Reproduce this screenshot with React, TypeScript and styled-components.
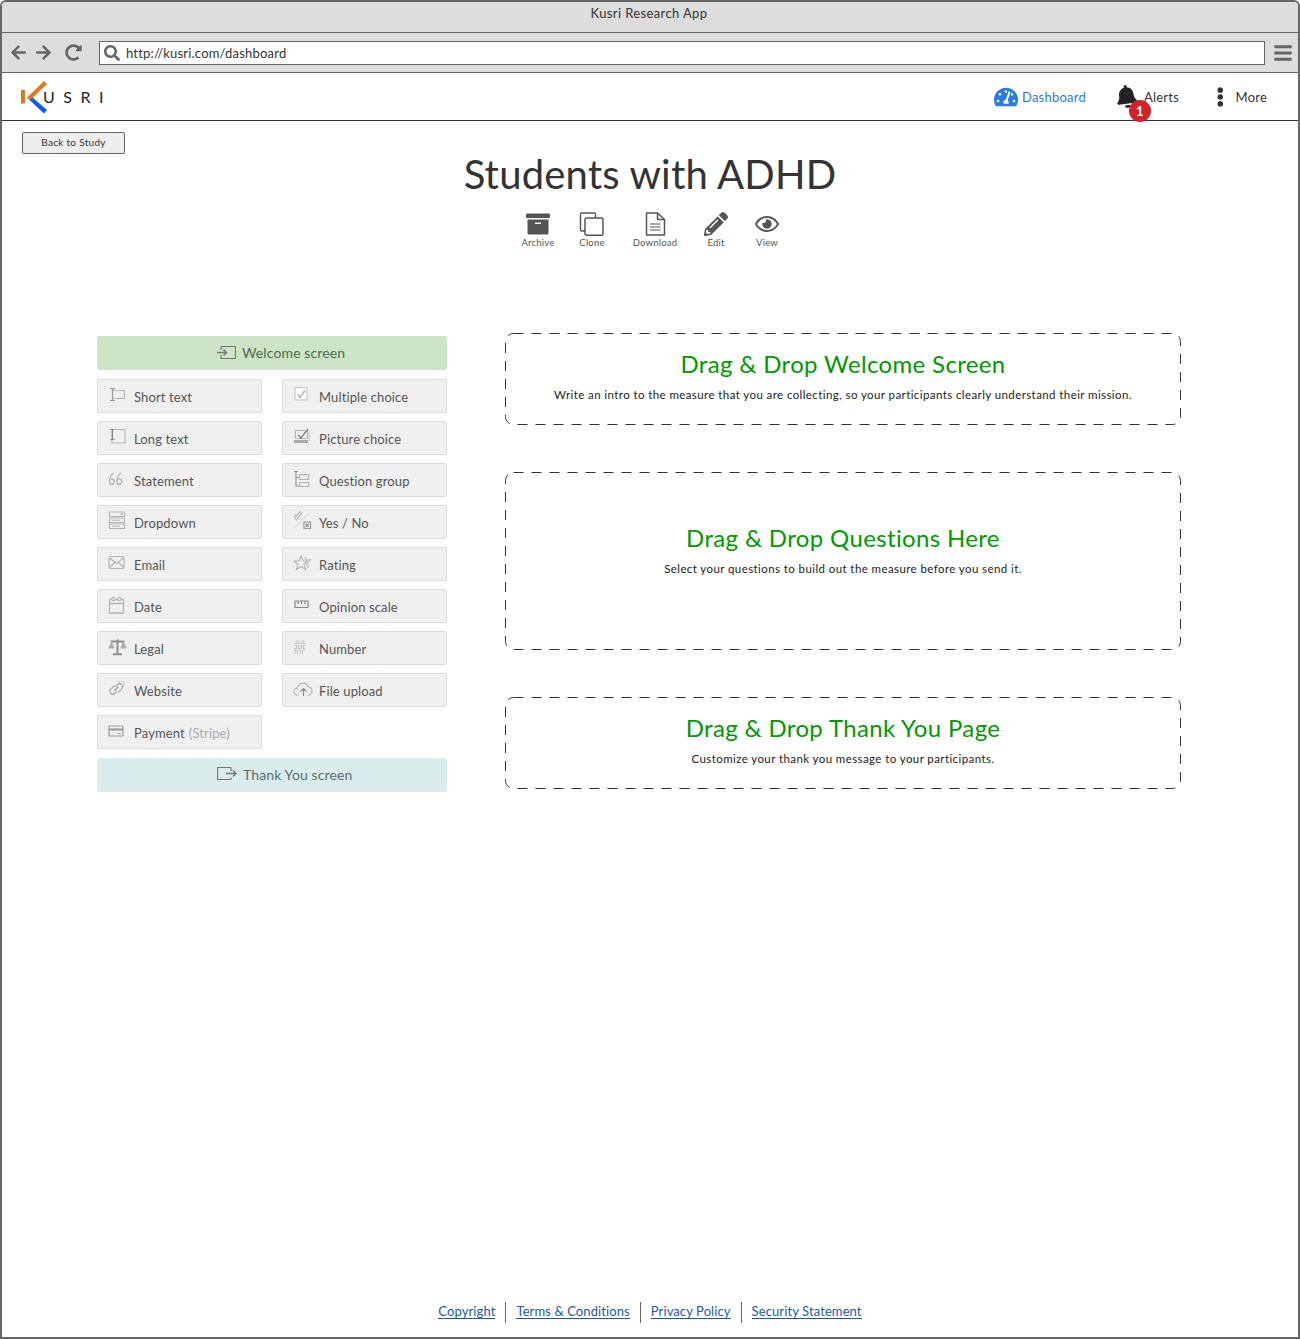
import React from "react";
import styled, { createGlobalStyle } from "styled-components";
import {
  FaArchive,
  FaArrowLeft,
  FaArrowRight,
  FaBars,
  FaBell,
  FaEllipsisV,
  FaPencilAlt,
  FaRedoAlt,
  FaRegEye,
  FaSearch,
  FaTachometerAlt,
} from "react-icons/fa";

const sketchFont = `"Lato", "Open Sans", sans-serif`;

const GlobalStyle = createGlobalStyle`
  html, body {
    margin: 0;
    padding: 0;
    background: #fff;
  }
  * {
    box-sizing: border-box;
  }
`;

const Glyph = ({ children, w = 20, h = 18 }: { children: React.ReactNode; w?: number; h?: number }) => (
  <svg width={w} height={h} viewBox={`0 0 ${w} ${h}`} fill="none" stroke="#b5b5b5" strokeWidth="1.2">
    {children}
  </svg>
);

const icons: Record<string, React.ReactNode> = {
  short: (
    <Glyph>
      <path d="M5 4.500h11.500v8H5" />
      <path d="M2 2.500h5M2 14.500h5M4.500 2.500v12" stroke="#999" />
    </Glyph>
  ),
  long: (
    <Glyph>
      <path d="M4 1.500h13v13.500H4z" />
      <path d="M2.500 1.500h4M2.500 11.500h4M4.500 1.500v10" stroke="#888" />
    </Glyph>
  ),
  statement: (
    <Glyph>
      <path d="M5.500 3C3 5 1.500 8 1.500 11c0 2 .8 3.500 2.200 3.500S6.200 13 6.200 11.500 5 9 3 9" strokeWidth="1.400" />
      <path d="M13 3c-2.500 2-4 5-4 8 0 2 .8 3.500 2.200 3.500s2.500-1.500 2.500-3S12.500 9 10.500 9" strokeWidth="1.400" />
    </Glyph>
  ),
  dropdown: (
    <Glyph h={19}>
      <path d="M1.500 1h15v4.500h-15zM1.500 7h15v4.500h-15zM1.500 13h15v4.500h-15z" />
      <path d="M4 9.250h8M4 15.250h8" />
      <path d="M12 2.500h3l-1.500 1.500z" fill="#999" stroke="none" />
    </Glyph>
  ),
  email: (
    <Glyph h={16}>
      <rect x="1" y="1.500" width="15" height="12" rx="2" />
      <path d="M1.500 3l7 5.500 7-5.500M1.500 12.500l5-5M15.500 12.500l-5-5" />
    </Glyph>
  ),
  date: (
    <Glyph>
      <path d="M1.500 3.500h2M7.500 3.500h2M13.500 3.500h2V17h-14V3.500M1.500 7.500h14" strokeWidth="1.300" />
      <circle cx="5.500" cy="3" r="1.700" />
      <circle cx="11.500" cy="3" r="1.700" />
    </Glyph>
  ),
  legal: (
    <Glyph>
      <path d="M9.500 1.500v14M5 16.200h9M2.500 3.500h14" stroke="#8c8c8c" strokeWidth="2" />
      <path d="M1 10h5l-2.500-6zM13 10h5l-2.500-6z" fill="#a5a5a5" />
    </Glyph>
  ),
  website: (
    <Glyph h={16}>
      <path d="M6.500 4.500l-3.800 3.800a2.900 2.900 0 0 0 4.100 4.100l2-2" strokeWidth="1.500" />
      <path d="M10 11.500l3.800-3.800a2.900 2.900 0 0 0-4.100-4.100l-2 2" strokeWidth="1.500" />
      <path d="M6.500 9.500l3.500-3.500" stroke="#999" strokeWidth="1.500" />
      <path d="M10 1.500a3 3 0 0 1 6 3" stroke="#ccc" />
    </Glyph>
  ),
  payment: (
    <Glyph w={17} h={14}>
      <rect x="1" y="2" width="14" height="10" rx="1" stroke="#999" />
      <path d="M1 5.500h14" stroke="#999" strokeWidth="2" />
      <path d="M9 9.500h4" />
    </Glyph>
  ),
  multiple: (
    <Glyph>
      <rect x="2" y="1.500" width="12" height="12.500" fill="#fafafa" stroke="#ccc" />
      <path d="M5 8.500l2 3 5-7" strokeWidth="1.500" />
    </Glyph>
  ),
  picture: (
    <Glyph>
      <path d="M2.500 2.500h12v8h-12z" />
      <path d="M5 7l3 3 7-9" stroke="#888" strokeWidth="1.500" />
      <path d="M1 12h14v3H1z" fill="#aaa" stroke="none" />
      <path d="M16.500 4v9" stroke="#ccc" />
    </Glyph>
  ),
  group: (
    <Glyph>
      <path d="M1 1.500h4M3 1.500v14.500h3M3 7.500h3" stroke="#999" />
      <path d="M6.500 4.500h9v5h-9zM6.500 12.500h9v4h-9z" />
    </Glyph>
  ),
  yesno: (
    <Glyph h={19}>
      <path d="M1.500 6l2 3 5-7a1.400 1.400 0 0 0-2-1L3.500 5 2.500 4z" />
      <path d="M2 16L15 3" stroke="#ddd" />
      <rect x="11" y="11" width="6.500" height="6.500" stroke="#999" />
      <path d="M12.700 12.700l3 3M15.700 12.700l-3 3" stroke="#888" />
    </Glyph>
  ),
  rating: (
    <Glyph>
      <path d="M8 2l2 5h5l-4 3.300 1.500 5.200L8 12.500l-4.500 3L5 10.300 1 7h5z" />
      <path d="M12 3l1 3h4l-3 3 1 5" stroke="#ccc" strokeWidth="2" />
    </Glyph>
  ),
  opinion: (
    <Glyph h={12}>
      <path d="M2 2h13v6.500H2zM5 2v3M8.500 2v3M12 2v3" stroke="#888" />
    </Glyph>
  ),
  number: (
    <Glyph w={14} h={18}>
      <path d="M5 2L3.500 16M10 2L8.500 16M1.500 6.500h11M1 11.500h11" strokeWidth="2.600" stroke="#bdbdbd" />
      <path d="M5 2L3.500 16M10 2L8.500 16M1.500 6.500h11M1 11.500h11" strokeWidth="1" stroke="#f0f0f0" />
    </Glyph>
  ),
  upload: (
    <Glyph w={22} h={16}>
      <path d="M6 14H4.500a3.500 3.500 0 0 1 0-7 5.500 5.500 0 0 1 10.500-1.500A4.500 4.500 0 0 1 16.500 14H15" />
      <path d="M10.500 15V8M7.500 10.500l3-3 3 3" stroke="#888" />
    </Glyph>
  ),
};

const leftItems: [string, string][] = [
  ["short", "Short text"],
  ["multiple", "Multiple choice"],
  ["long", "Long text"],
  ["picture", "Picture choice"],
  ["statement", "Statement"],
  ["group", "Question group"],
  ["dropdown", "Dropdown"],
  ["yesno", "Yes / No"],
  ["email", "Email"],
  ["rating", "Rating"],
  ["date", "Date"],
  ["opinion", "Opinion scale"],
  ["legal", "Legal"],
  ["number", "Number"],
  ["website", "Website"],
  ["upload", "File upload"],
];

const Window = styled.div`
  width: 1300px;
  height: 1339px;
  display: flex;
  flex-direction: column;
  border: 2px solid #666;
  border-radius: 6px 6px 0 0;
  overflow: hidden;
  font-family: ${sketchFont};
  color: #333;
`;

const TitleBar = styled.div`
  height: 31px;
  background: #ddd;
  border-bottom: 1px solid #666;
  text-align: center;
  font-size: 13px;
  line-height: 23px;
  letter-spacing: 0.38px;
  padding-right: 2px;
`;

const Toolbar = styled.div`
  height: 40px;
  background: #ddd;
  border-bottom: 1px solid #666;
  display: flex;
  align-items: center;
  padding-left: 8px;
  color: #666;
`;

const NavGroup = styled.div`
  width: 89px;
  flex: none;
  display: flex;
  align-items: center;
  font-size: 17px;
  svg + svg {
    margin-left: 8px;
  }
  svg:last-child {
    margin-left: 13px;
  }
`;

const AddressBar = styled.div`
  width: 1166px;
  flex: none;
  height: 24px;
  background: #fff;
  border: 1px solid #666;
  display: flex;
  align-items: center;
  padding-left: 4px;
  gap: 6px;
  color: #333;
  font-size: 13px;
  letter-spacing: 0.2px;
  svg {
    color: #666;
    font-size: 16px;
  }
`;

const MenuIcon = styled(FaBars)`
  flex: none;
  margin-left: 8px;
  font-size: 20px;
`;

const Header = styled.header`
  height: 48px;
  border-bottom: 1px solid #333;
  display: flex;
  align-items: center;
  padding: 0 31px 0 18px;
`;

const Logo = styled.div`
  display: flex;
  align-items: center;
  flex: 1;
`;

const LogoText = styled.span`
  margin-left: -5px;
  font-size: 16px;
  letter-spacing: 8.500px;
  color: #222;
`;

const NavLink = styled.a<{ $active?: boolean; $w: number }>`
  width: ${(p) => p.$w}px;
  position: relative;
  display: flex;
  align-items: center;
  font-size: 13px;
  letter-spacing: 0.22px;
  color: ${(p) => (p.$active ? "#2b7be4" : "#333")};
`;

const DashboardIcon = styled(FaTachometerAlt)`
  font-size: 24px;
  margin-right: 4px;
`;

const BellIcon = styled(FaBell)`
  font-size: 23px;
  margin: 0 6px 0 -1px;
  color: #222;
  transform: rotate(-8deg);
`;

const MoreIcon = styled(FaEllipsisV)`
  font-size: 20px;
  margin: 0 9px 0 -2px;
`;

const Badge = styled.span`
  position: absolute;
  left: 13px;
  top: 15px;
  width: 22px;
  height: 22px;
  border-radius: 50%;
  background: #d2232a;
  color: #fff;
  font-size: 13px;
  font-weight: 700;
  line-height: 22px;
  text-align: center;
`;

const Main = styled.main`
  flex: 1;
  display: flex;
  flex-direction: column;
`;

const BackButton = styled.button`
  align-self: flex-start;
  margin: 11px 0 0 20px;
  width: 103px;
  height: 22px;
  padding: 0 0 2px;
  background: #eee;
  border: 1px solid #666;
  border-radius: 2px;
  font-family: ${sketchFont};
  font-size: 10px;
  letter-spacing: 0.3px;
  color: #333;
`;

const Title = styled.h1`
  margin: 0;
  height: 58px;
  font-size: 40px;
  font-weight: 400;
  line-height: 41px;
  letter-spacing: 0.200px;
  text-align: center;
  color: #333;
`;

const Actions = styled.div`
  display: flex;
  justify-content: center;
  padding-left: 4px;
`;

const Action = styled.div<{ $w: number }>`
  width: ${(p) => p.$w}px;
  display: flex;
  flex-direction: column;
  align-items: center;
  height: 36px;
  justify-content: space-between;
  font-size: 9.500px;
  letter-spacing: 0.2px;
  color: #555;
  svg {
    color: #555;
    font-size: 24px;
    height: 24px;
  }
`;

const Builder = styled.section`
  margin-top: 85px;
  padding-left: 95px;
  display: flex;
  align-items: flex-start;
  gap: 58px;
`;

const Palette = styled.div`
  width: 350px;
  margin-top: 3px;
  display: grid;
  grid-template-columns: 165px 165px;
  column-gap: 20px;
  row-gap: 8px;
`;

const Banner = styled.div<{ $tone: string; $color: string; $margin: string }>`
  grid-column: 1 / 3;
  height: 34px;
  margin: ${(p) => p.$margin};
  background: ${(p) => p.$tone};
  color: ${(p) => p.$color};
  border-radius: 2px;
  display: flex;
  align-items: center;
  gap: 6px;
  padding: 0 0 2px 120px;
  font-size: 14px;
  letter-spacing: 0.12px;
`;

const Item = styled.div`
  height: 34px;
  padding-top: 1px;
  background: #f0f0f0;
  border: 1px solid #dcdcdc;
  border-radius: 2px;
  display: flex;
  align-items: center;
  font-size: 13px;
  letter-spacing: 0.12px;
  color: #555;
`;

const ItemIcon = styled.span`
  width: 36px;
  padding-left: 10px;
  margin-top: -4px;
  display: flex;
  align-items: center;
  flex: none;
`;

const Muted = styled.span`
  color: #aaa;
  margin-left: 4px;
`;

const Zones = styled.div`
  width: 676px;
  display: flex;
  flex-direction: column;
  gap: 47px;
`;

const Zone = styled.div<{ $h: number; $lift: number }>`
  position: relative;
  height: ${(p) => p.$h}px;
  display: flex;
  flex-direction: column;
  align-items: center;
  justify-content: center;
  padding-bottom: ${(p) => p.$lift}px;
  text-align: center;
`;

const ZoneFrame = styled.svg`
  position: absolute;
  inset: 0;
  width: 100%;
  height: 100%;
  rect {
    x: 0.5px;
    y: 0.5px;
    width: calc(100% - 1px);
    height: calc(100% - 1px);
    rx: 8px;
    fill: none;
    stroke: #333;
    stroke-width: 1;
    stroke-dasharray: 10 8;
  }
`;

const ZoneTitle = styled.h2`
  margin: 0;
  font-size: 24px;
  font-weight: 400;
  line-height: 30px;
  letter-spacing: 0.35px;
  color: #009900;
`;

const ZoneText = styled.p`
  margin: 8px 0 0;
  font-size: 11.500px;
  line-height: 16px;
  letter-spacing: 0.41px;
  color: #222;
`;

const Footer = styled.footer`
  height: 34px;
  display: flex;
  justify-content: center;
  align-items: flex-start;
  font-size: 13px;
  letter-spacing: 0.1px;
`;

const FooterLink = styled.a`
  height: 16px;
  line-height: 16px;
  color: #1b5aa6;
  border-bottom: 1px solid #1b5aa6;
`;

const FooterSep = styled.span`
  width: 1px;
  height: 21px;
  margin: -1px 10px 0;
  background: #666;
`;

const CloneIcon = () => (
  <svg width="26" height="24" viewBox="0 0 26 24" fill="#fff" stroke="#555" strokeWidth="1.500">
    <path d="M6 19H3a1.500 1.500 0 0 1-1.500-1.500v-15A1.500 1.500 0 0 1 3 1h12a1.500 1.500 0 0 1 1.500 1.500V6" />
    <rect x="6" y="6" width="18" height="17.200" rx="1.500" />
  </svg>
);

const FileIcon = () => (
  <svg width="22" height="24" viewBox="0 0 22 24" fill="none" stroke="#555" strokeWidth="1.500">
    <path d="M13.500 1H2.500v22h18V7.500zM13.500 1v6.500h7" strokeLinejoin="round" />
    <path d="M6 12h10.500M6 15h10.500M6 18h10.500" strokeWidth="1.200" />
  </svg>
);

const LogoMark = () => (
  <svg width="28" height="34" viewBox="0 0 28 34">
    <rect x="1" y="10" width="4" height="13.500" fill="#e5761a" />
    <path d="M7 17.500L24 1l3 3-14 13.500-3 3z" fill="#e5761a" />
    <path d="M9.500 20L12.500 17.500 27 30l-3 3.500z" fill="#0a5bf0" />
  </svg>
);

const BannerInIcon = () => (
  <svg width="19" height="13" viewBox="0 0 19 13" fill="none" stroke="#777">
    <path d="M4 .5h14.500v12H4V9M4 4V.5" strokeWidth="1.200" />
    <path d="M0 6.500h9M6.500 3.500l3 3-3 3" strokeWidth="1.500" />
  </svg>
);

const BannerOutIcon = () => (
  <svg width="20" height="14" viewBox="0 0 20 14" fill="none" stroke="#777">
    <path d="M14 .5H.5v12H14v-2M14 4V.5" strokeWidth="1.200" />
    <path d="M9 6.500h10M16 3.500l3 3-3 3" strokeWidth="1.500" />
  </svg>
);

export default function App() {
  return (
    <>
      <GlobalStyle />
      <Window>
        <TitleBar>Kusri Research App</TitleBar>
        <Toolbar>
          <NavGroup>
            <FaArrowLeft />
            <FaArrowRight />
            <FaRedoAlt />
          </NavGroup>
          <AddressBar>
            <FaSearch />
            http://kusri.com/dashboard
          </AddressBar>
          <MenuIcon />
        </Toolbar>
        <Header>
          <Logo>
            <LogoMark />
            <LogoText>USRI</LogoText>
          </Logo>
          <NavLink $active $w={122}>
            <DashboardIcon />
            Dashboard
          </NavLink>
          <NavLink $w={100}>
            <BellIcon />
            Alerts
            <Badge>1</Badge>
          </NavLink>
          <NavLink $w={51}>
            <MoreIcon />
            More
          </NavLink>
        </Header>
        <Main>
          <BackButton>Back to Study</BackButton>
          <Title>Students with ADHD</Title>
          <Actions>
            <Action $w={54}>
              <FaArchive />
              Archive
            </Action>
            <Action $w={54}>
              <CloneIcon />
              Clone
            </Action>
            <Action $w={72}>
              <FileIcon />
              Download
            </Action>
            <Action $w={50}>
              <FaPencilAlt />
              Edit
            </Action>
            <Action $w={52}>
              <FaRegEye />
              View
            </Action>
          </Actions>
          <Builder>
            <Palette>
              <Banner $tone="#cde5c6" $color="#4f6b4f" $margin="0 0 1px">
                <BannerInIcon />
                Welcome screen
              </Banner>
              {leftItems.map(([key, label]) => (
                <Item key={key}>
                  <ItemIcon>{icons[key]}</ItemIcon>
                  {label}
                </Item>
              ))}
              <Item>
                <ItemIcon>{icons.payment}</ItemIcon>
                Payment<Muted>(Stripe)</Muted>
              </Item>
              <Banner $tone="#dbecec" $color="#5b6e70" $margin="1px 0 0">
                <BannerOutIcon />
                Thank You screen
              </Banner>
            </Palette>
            <Zones>
              <Zone $h={92} $lift={7}>
                <ZoneFrame><rect /></ZoneFrame>
                <ZoneTitle>Drag &amp; Drop Welcome Screen</ZoneTitle>
                <ZoneText>Write an intro to the measure that you are collecting, so your participants clearly understand their mission.</ZoneText>
              </Zone>
              <Zone $h={178} $lift={23}>
                <ZoneFrame><rect /></ZoneFrame>
                <ZoneTitle>Drag &amp; Drop Questions Here</ZoneTitle>
                <ZoneText>Select your questions to build out the measure before you send it.</ZoneText>
              </Zone>
              <Zone $h={92} $lift={7}>
                <ZoneFrame><rect /></ZoneFrame>
                <ZoneTitle>Drag &amp; Drop Thank You Page</ZoneTitle>
                <ZoneText>Customize your thank you message to your participants.</ZoneText>
              </Zone>
            </Zones>
          </Builder>
        </Main>
        <Footer>
          <FooterLink>Copyright</FooterLink>
          <FooterSep />
          <FooterLink>Terms &amp; Conditions</FooterLink>
          <FooterSep />
          <FooterLink>Privacy Policy</FooterLink>
          <FooterSep />
          <FooterLink>Security Statement</FooterLink>
        </Footer>
      </Window>
    </>
  );
}
